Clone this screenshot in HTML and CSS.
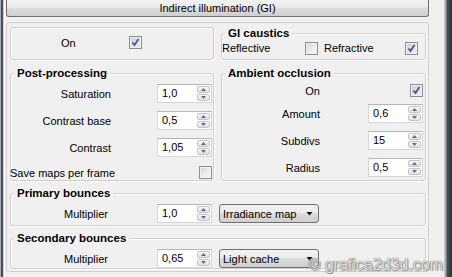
FILE: index.html
```html
<!DOCTYPE html>
<html lang="en">
<head>
  <meta charset="UTF-8">
  <title>Indirect illumination (GI)</title>
  <link rel="stylesheet" href="styles.css">
</head>
<body>
<div class="window">
  <div class="edge-left"></div>

  <div class="main">
    <div class="rollout-title">Indirect illumination (GI)</div>

    <div class="rollout">
      <div class="row row-top">
        <div class="box box-on">
          <span class="on-label">On</span>
          <span class="check on"><svg width="11" height="11" viewBox="0 0 11 11"><path d="M2.5 5.5 L4.5 8 L8.5 2" /></svg></span>
        </div>

        <fieldset class="box caustics">
          <legend>GI caustics</legend>
          <div class="caustics-row">
            <span class="c-label">Reflective</span>
            <span class="check"></span>
            <span class="c-label refr">Refractive</span>
            <span class="check on"><svg width="11" height="11" viewBox="0 0 11 11"><path d="M2.5 5.5 L4.5 8 L8.5 2" /></svg></span>
          </div>
        </fieldset>
      </div>

      <div class="row row-mid">
        <fieldset class="box post">
          <legend>Post-processing</legend>
          <div class="field">
            <label>Saturation</label>
            <div class="spin"><span class="val">1,0</span><span class="arrows"><i class="up"></i><i class="down"></i></span></div>
          </div>
          <div class="field">
            <label>Contrast base</label>
            <div class="spin"><span class="val">0,5</span><span class="arrows"><i class="up"></i><i class="down"></i></span></div>
          </div>
          <div class="field">
            <label>Contrast</label>
            <div class="spin"><span class="val">1,05</span><span class="arrows"><i class="up"></i><i class="down"></i></span></div>
          </div>
          <div class="field save">
            <label>Save maps per frame</label>
            <span class="check"></span>
          </div>
        </fieldset>

        <fieldset class="box ao">
          <legend>Ambient occlusion</legend>
          <div class="field ao-on">
            <label>On</label>
            <span class="check on"><svg width="11" height="11" viewBox="0 0 11 11"><path d="M2.5 5.5 L4.5 8 L8.5 2" /></svg></span>
          </div>
          <div class="field">
            <label>Amount</label>
            <div class="spin"><span class="val">0,6</span><span class="arrows"><i class="up"></i><i class="down"></i></span></div>
          </div>
          <div class="field">
            <label>Subdivs</label>
            <div class="spin"><span class="val">15</span><span class="arrows"><i class="up"></i><i class="down"></i></span></div>
          </div>
          <div class="field">
            <label>Radius</label>
            <div class="spin"><span class="val">0,5</span><span class="arrows"><i class="up"></i><i class="down"></i></span></div>
          </div>
        </fieldset>
      </div>

      <fieldset class="box bounces">
        <legend>Primary bounces</legend>
        <div class="field">
          <label>Multiplier</label>
          <div class="spin"><span class="val">1,0</span><span class="arrows"><i class="up"></i><i class="down"></i></span></div>
          <div class="combo">Irradiance map</div>
        </div>
      </fieldset>

      <fieldset class="box bounces secondary">
        <legend>Secondary bounces</legend>
        <div class="field">
          <label>Multiplier</label>
          <div class="spin"><span class="val">0,65</span><span class="arrows"><i class="up"></i><i class="down"></i></span></div>
          <div class="combo">Light cache</div>
        </div>
      </fieldset>
    </div>
  </div>

  <div class="edge-right"></div>

  <div class="watermark">© grafica2d3d.com</div>
</div>
</body>
</html>
```

FILE: styles.css
```css
* {
  box-sizing: border-box;
}

body {
  margin: 0;
  background: #f0f0f0;
  font-family: "Liberation Sans", Arial, sans-serif;
  font-size: 11px;
  color: #000;
}

.window {
  position: relative;
  display: flex;
  height: 277px;
  overflow: hidden;
}

.edge-left {
  width: 5px;
  background: linear-gradient(to right, #a9afb6 0, #a9afb6 1px, #3d4650 1px, #505964 3px, #c9cdd1 3px, #c9cdd1 4px, #fff 4px);
}

.edge-right {
  flex: 1;
  background: linear-gradient(to right, #d2d2d2 0, #9aa0a6 2px, #4c535c 3px, #2a3139 100%);
}

.main {
  width: 439px;
}

.rollout-title {
  margin-left: 1px;
  width: 423px;
  height: 17px;
  border: 1px solid #707070;
  border-top: none;
  border-radius: 0 0 3px 3px;
  background: linear-gradient(#f2f2f2 0, #ebebeb 45%, #dddddd 50%, #cfcfcf 100%);
  text-align: center;
  line-height: 16px;
}

.rollout {
  margin: 5px 0 0 1px;
  width: 423px;
  border: 1px solid #d0d0d0;
  border-radius: 3px;
  padding: 4px 2px 2px 3px;
}

.row {
  display: grid;
  grid-template-columns: 204px 205px;
  column-gap: 7px;
}

.row-top {
  height: 33px;
}

.row-mid {
  margin-top: 7px;
}

.box {
  border: 1px solid #cfcfcf;
  border-radius: 3px;
  box-shadow: 1px 1px 0 #fff, inset 1px 1px 0 #fff;
}

fieldset.box {
  margin: 0;
  padding: 0;
  min-width: 0;
}

legend {
  font-weight: bold;
  font-size: 11.5px;
  line-height: 13px;
  padding: 0 3px;
  margin-left: 3px;
}

/* checkbox */
.check {
  display: inline-block;
  flex: none;
  width: 13px;
  height: 13px;
  border: 1px solid #8e8f8f;
  background: linear-gradient(135deg, #d3d5d9 0, #eeeeee 60%, #fbfbfb 100%);
  box-shadow: inset 0 0 0 1px #f2f2f2;
}

.check.on {
  background: linear-gradient(135deg, #c4ccd8 0, #e4e8ee 70%, #f2f4f7 100%);
}

.check svg {
  display: block;
}

.check path {
  fill: none;
  stroke: #465a92;
  stroke-width: 1.8;
}

/* On box */
.box-on {
  display: flex;
  align-items: center;
  padding: 0 0 2px 50px;
}

.on-label {
  width: 68px;
}

/* GI caustics */
.caustics-row {
  display: flex;
  align-items: center;
  height: 14px;
  margin-top: 1px;
}

.c-label {
  width: 83px;
}

.c-label.refr {
  width: 81px;
  margin-left: 6px;
}

/* rows with label + control */
.field {
  display: flex;
  align-items: center;
  height: 19px;
  margin-top: 8px;
}

.field label {
  text-align: right;
}

.post .field label {
  width: 100px;
  margin-right: 46px;
}

.post .field:first-of-type {
  margin-top: 4px;
}

.post .save {
  height: 13px;
  margin-top: 9px;
  margin-bottom: 1px;
}

.post .save label {
  width: auto;
  margin: 0 0 0 -1px;
}

.post .save .check {
  margin: 0 1px 0 auto;
}

.ao .field label {
  width: 98px;
  margin-right: 48px;
}

.ao .ao-on {
  margin-top: 1px;
  margin-bottom: -4px;
}

.ao .ao-on .check {
  margin: 0 2px 0 auto;
}

fieldset.bounces {
  margin-top: 6px;
}

.bounces .field {
  margin: 4px 0 2px;
}

.bounces.secondary .field {
  margin-bottom: 0;
}

.bounces .field label {
  width: 97px;
  margin-right: 49px;
}

/* spinner */
.spin {
  display: flex;
  width: 55px;
  height: 19px;
  border: 1px solid #d6d6d6;
  border-top-color: #b6b6b6;
  background: #fff;
  padding: 1px;
}

.spin .val {
  flex: 1;
  padding-left: 3px;
  line-height: 15px;
}

.arrows {
  display: flex;
  flex-direction: column;
  gap: 1px;
  width: 13px;
}

.arrows i {
  flex: 1;
  display: flex;
  align-items: center;
  justify-content: center;
  border: 1px solid #c4c4c4;
  border-radius: 2px;
  background: linear-gradient(#f6f6f6, #e1e1e1);
}

.arrows i::after {
  content: "";
  width: 5px;
  height: 3px;
  background: #566c9e;
}

.arrows .up::after {
  clip-path: polygon(50% 0, 100% 100%, 0 100%);
}

.arrows .down::after {
  clip-path: polygon(0 0, 100% 0, 50% 100%);
}

/* dropdown */
.combo {
  display: flex;
  align-items: center;
  justify-content: space-between;
  width: 100px;
  height: 19px;
  margin-left: 7px;
  padding: 0 5px 0 3px;
  border: 1px solid #707070;
  border-radius: 3px;
  background: linear-gradient(#f2f2f2 0, #ebebeb 50%, #dddddd 50%, #cfcfcf 100%);
}

.combo::after {
  content: "";
  width: 7px;
  height: 4px;
  background: #111;
  clip-path: polygon(0 0, 100% 0, 50% 100%);
}

.watermark {
  position: absolute;
  right: 9px;
  bottom: 4px;
  font-size: 16px;
  line-height: 16px;
  color: #e4e4e4;
  text-shadow: 0 0 1px #6a6a6a, 0 0 1px #6a6a6a, 1px 1px 1px #9a9a9a;
}
```
